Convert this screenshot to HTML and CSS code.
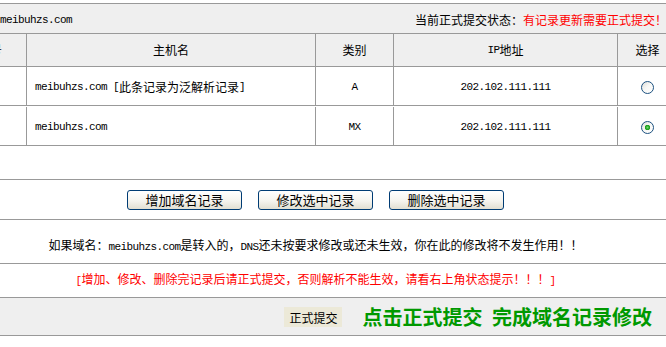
FILE: index.html
```html
<!DOCTYPE html>
<html>
<head>
    <link rel="stylesheet" href="styles.css">
</head>
<body>
    <div class="page">
        <div class="topbar">
            <span class="en">meibuhzs.com</span>
            <span class="state">当前正式提交状态：<em>有记录更新需要正式提交！</em></span>
        </div>

        <div class="records">
            <div class="row head">
                <div class="c0">序号</div>
                <div class="c1">主机名</div>
                <div class="c2">类别</div>
                <div class="c3"><span class="en">IP</span>地址</div>
                <div class="c4">选择</div>
            </div>
            <div class="row rec">
                <div class="c0"></div>
                <div class="c1 host"><span class="en">meibuhzs.com [</span>此条记录为泛解析记录<span class="en">]</span></div>
                <div class="c2"><span class="en">A</span></div>
                <div class="c3"><span class="en">202.102.111.111</span></div>
                <div class="c4"><input type="radio" name="rec"></div>
            </div>
            <div class="row rec">
                <div class="c0"></div>
                <div class="c1 host"><span class="en">meibuhzs.com</span></div>
                <div class="c2"><span class="en">MX</span></div>
                <div class="c3"><span class="en">202.102.111.111</span></div>
                <div class="c4"><input type="radio" name="rec" checked></div>
            </div>
        </div>

        <div class="blank"></div>

        <div class="actions">
            <button class="xp-btn">增加域名记录</button>
            <button class="xp-btn">修改选中记录</button>
            <button class="xp-btn">删除选中记录</button>
        </div>

        <div class="notice">如果域名：<span class="en">meibuhzs.com</span>是转入的，<span class="en">DNS</span>还未按要求修改或还未生效，你在此的修改将不发生作用！！</div>

        <div class="warn"><span class="en">[</span>增加、修改、删除完记录后请正式提交，否则解析不能生效，请看右上角状态提示！！！<span class="en">]</span></div>

        <div class="submitbar">
            <button class="submit">正式提交</button>
            <span class="done">点击正式提交 完成域名记录修改</span>
        </div>
    </div>
</body>
</html>
```

FILE: styles.css
```css
html, body {
    margin: 0;
    overflow: hidden;
    background: #fff;
}

body {
    font-family: "Noto Sans CJK SC", sans-serif;
    font-size: 12px;
    color: #000;
}

.page {
    width: 711px;
    margin-left: -34px;
}

.en {
    font-family: "Liberation Mono", monospace;
    font-size: 11px;
    letter-spacing: -0.6px;
}

.topbar {
    margin-top: 3px;
    height: 27px;
    padding: 2px 10px 0 34px;
    border-top: 1px solid #999;
    border-bottom: 1px solid #999;
    background: #efefef;
    display: flex;
    justify-content: space-between;
    align-items: center;
    line-height: 14px;
}

.state em {
    font-style: normal;
    color: #f00;
}

.row {
    display: flex;
    height: 38px;
    border-bottom: 1px solid #999;
}

.row.head {
    height: 32px;
    background: #efefef;
}

.rec + .rec {
    margin-top: 1px;
}

.row > div {
    box-sizing: border-box;
    display: flex;
    align-items: center;
    justify-content: center;
    line-height: 14px;
}

.rec > div {
    padding-top: 2px;
}

.c0 {
    width: 60px;
    justify-content: flex-end !important;
    padding-right: 24px;
}

.c1, .c2, .c3, .c4 {
    border-left: 1px solid #999;
}

.c1 { width: 289px; }
.c2 { width: 78px; }
.c3 { width: 224px; }
.c4 { width: 60px; }

.c1.host {
    justify-content: flex-start;
    padding-left: 8px;
}

input[type="radio"] {
    appearance: none;
    -webkit-appearance: none;
    margin: 0;
    width: 13px;
    height: 13px;
    border: 1px solid #1c5180;
    border-radius: 50%;
    box-sizing: border-box;
    background: linear-gradient(135deg, #dcdcd7, #f7f7f5 45%, #fff);
}

input[type="radio"]:checked {
    background:
        radial-gradient(circle, #6fd86f 0, #21a121 2px, #21a121 2.5px, transparent 3px),
        linear-gradient(135deg, #dcdcd7, #f7f7f5 45%, #fff);
}

.blank {
    height: 33px;
    border-bottom: 1px solid #999;
}

.actions {
    display: flex;
    justify-content: center;
    gap: 16px;
    padding: 10px 12px 9px 0;
    border-bottom: 1px solid #999;
}

.xp-btn {
    width: 115px;
    height: 20px;
    padding: 0;
    font-family: "Noto Sans CJK SC", sans-serif;
    font-size: 13px;
    line-height: 18px;
    color: #000;
    border: 1px solid #003c74;
    border-radius: 3px;
    background: linear-gradient(#fff, #f5f4ee 55%, #e2dfd2);
}

.notice {
    padding: 18px 12px 9px 0;
    line-height: 14px;
    text-align: center;
    border-bottom: 1px solid #999;
}

.warn {
    padding: 8px 12px 9px 0;
    line-height: 14px;
    text-align: center;
    color: #f00;
    border-bottom: 1px solid #999;
}

.submitbar {
    display: flex;
    justify-content: flex-end;
    align-items: center;
    gap: 20px;
    height: 20px;
    padding: 9px 25px 8px 0;
    background: #efefef;
    border-bottom: 1px solid #999;
}

.submit {
    width: 58px;
    height: 20px;
    padding: 0;
    border: none;
    background: #ece9d8;
    font-family: "Noto Sans CJK SC", sans-serif;
    font-size: 12px;
    color: #000;
}

.done {
    color: #090;
    font-weight: bold;
    font-size: 20px;
    line-height: 20px;
    word-spacing: 5px;
}
```
